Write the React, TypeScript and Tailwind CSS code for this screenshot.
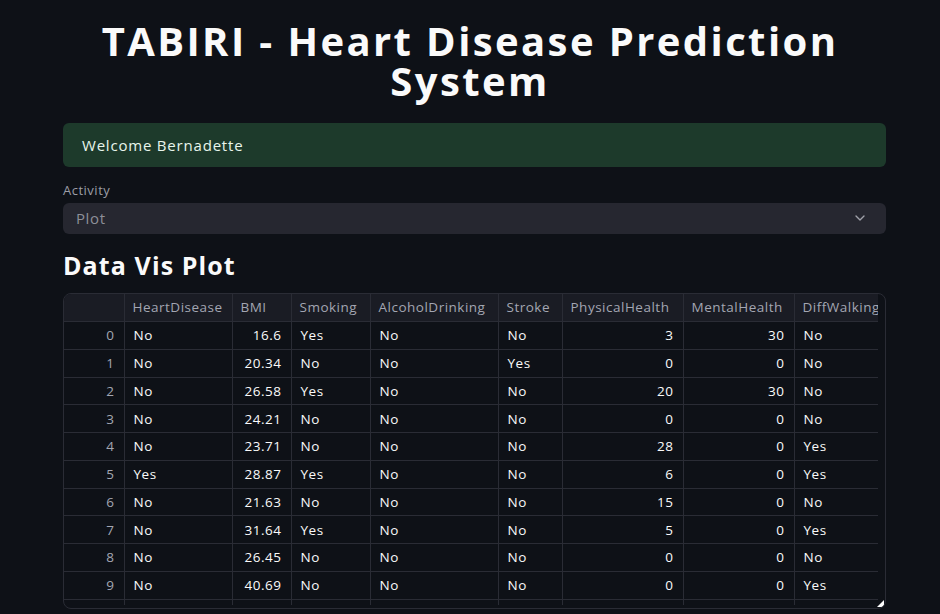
import React from 'react';
import { ChevronDown } from 'lucide-react';

type Row = [string, string, string, string, string, string, string, string];

const rows: Row[] = [
  ['No', '16.6', 'Yes', 'No', 'No', '3', '30', 'No'],
  ['No', '20.34', 'No', 'No', 'Yes', '0', '0', 'No'],
  ['No', '26.58', 'Yes', 'No', 'No', '20', '30', 'No'],
  ['No', '24.21', 'No', 'No', 'No', '0', '0', 'No'],
  ['No', '23.71', 'No', 'No', 'No', '28', '0', 'Yes'],
  ['Yes', '28.87', 'Yes', 'No', 'No', '6', '0', 'Yes'],
  ['No', '21.63', 'No', 'No', 'No', '15', '0', 'No'],
  ['No', '31.64', 'Yes', 'No', 'No', '5', '0', 'Yes'],
  ['No', '26.45', 'No', 'No', 'No', '0', '0', 'No'],
  ['No', '40.69', 'No', 'No', 'No', '0', '0', 'Yes'],
];

const columns = [
  { name: 'HeartDisease', width: 'w-[108px]', num: false },
  { name: 'BMI', width: 'w-[59px]', num: true },
  { name: 'Smoking', width: 'w-[79px]', num: false },
  { name: 'AlcoholDrinking', width: 'w-[128px]', num: false },
  { name: 'Stroke', width: 'w-[64px]', num: false },
  { name: 'PhysicalHealth', width: 'w-[121px]', num: true },
  { name: 'MentalHealth', width: 'w-[111px]', num: true },
  { name: 'DiffWalking', width: 'w-[110px]', num: false },
];

const DataFrame: React.FC = () => (
  <div className="relative flex h-[316px] w-full overflow-hidden rounded-lg border border-[#2a2c35]">
    <div className="flex-1 overflow-hidden">
      <table className="w-[840px] min-w-[840px] table-fixed border-collapse text-[13.5px] tracking-[0.5px]">
        <thead>
          <tr className="h-[28px] bg-[#1a1c24] text-[#a3a6b2]">
            <th className="w-[60px] border-r border-b border-[#2a2c35]" />
            {columns.map((c) => (
              <th
                key={c.name}
                className={`${c.width} overflow-hidden border-r border-b border-[#2a2c35] px-[8px] text-left font-normal whitespace-nowrap`}
              >
                {c.name}
              </th>
            ))}
          </tr>
        </thead>
        <tbody>
          {rows.map((r, i) => (
            <tr key={i} className="h-[27.75px] text-[#fafafa]">
              <td className="border-r border-b border-[#2a2c35] pr-[9px] text-right text-[#a3a6b2]">{i}</td>
              {r.map((v, j) => (
                <td
                  key={j}
                  className={`border-r border-b border-[#2a2c35] px-[9px] whitespace-nowrap ${columns[j].num ? 'text-right' : 'text-left'}`}
                >
                  {v}
                </td>
              ))}
            </tr>
          ))}
          <tr className="h-[6px]">
            <td className="border-r border-[#2a2c35]" />
            {columns.map((c) => (
              <td key={c.name} className="border-r border-[#2a2c35]" />
            ))}
          </tr>
        </tbody>
      </table>
    </div>
    <div className="w-[7px]" />
    <div className="absolute right-[1px] bottom-[1px] h-0 w-0 [border-bottom:0] [border-right:7px_solid_#fff] border-t-[7px] border-l-0 border-t-transparent" />
  </div>
);

export default function App() {
  return (
    <div className="min-h-[614px] w-[940px] bg-[#0e1117] pt-[21px] text-[#fafafa] [font-family:'Open_Sans',sans-serif]">
      <h1 className="mx-auto w-[823px] text-center text-[40px] leading-[40px] font-bold tracking-[2.4px]">
        TABIRI - Heart Disease Prediction System
      </h1>

      <div className="ml-[63px] w-[823px]">
        <div className="mt-[22px] flex h-[44px] items-center rounded-md bg-[#1d3a2b] px-[19px] text-[15px] tracking-[0.8px] text-[#e8f5ec]">
          Welcome Bernadette
        </div>

        <div className="mt-[14px] text-[13px] tracking-[0.5px] text-[#9b9da6]">Activity</div>
        <div className="mt-[2px] flex h-[31px] items-center justify-between rounded-md bg-[#262730] pr-[17px] pl-[13px]">
          <span className="text-[15px] tracking-[0.6px] text-[#8d8f98]">Plot</span>
          <ChevronDown className="h-[16px] w-[18px] text-[#a0a2aa]" strokeWidth={2} />
        </div>

        <h2 className="mt-[15px] text-[25px] leading-[32px] font-bold tracking-[1.1px]">Data Vis Plot</h2>

        <div className="mt-[12px]">
          <DataFrame />
        </div>
      </div>
    </div>
  );
}
